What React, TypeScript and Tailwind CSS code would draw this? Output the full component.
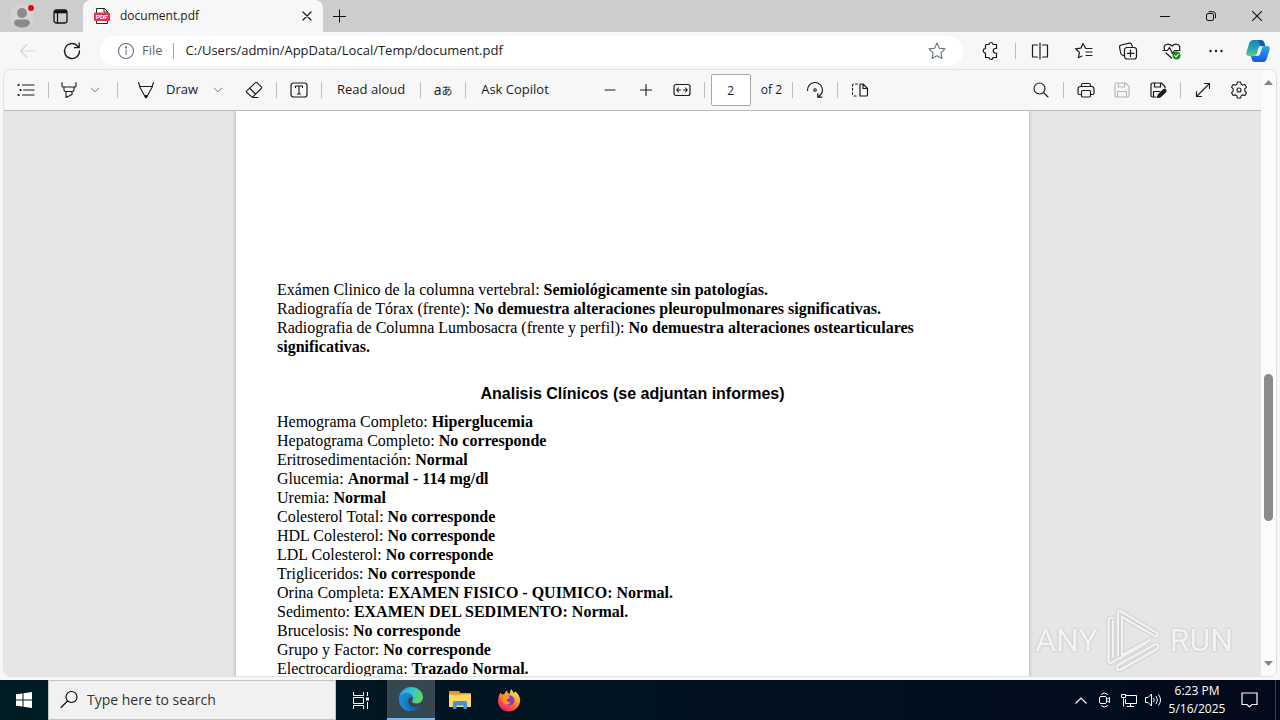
import { ReactNode } from "react";

const linesTop = [
  ["Exámen Clinico de la columna vertebral:", "Semiológicamente sin patologías."],
  [
    "Radiografía de Tórax (frente):",
    "No demuestra alteraciones pleuropulmonares significativas.",
  ],
  [
    "Radiografia de Columna Lumbosacra (frente y perfil):",
    "No demuestra alteraciones ostearticulares significativas.",
  ],
];

const linesLab = [
  ["Hemograma Completo:", "Hiperglucemia"],
  ["Hepatograma Completo:", "No corresponde"],
  ["Eritrosedimentación:", "Normal"],
  ["Glucemia:", "Anormal - 114 mg/dl"],
  ["Uremia:", "Normal"],
  ["Colesterol Total:", "No corresponde"],
  ["HDL Colesterol:", "No corresponde"],
  ["LDL Colesterol:", "No corresponde"],
  ["Trigliceridos:", "No corresponde"],
  ["Orina Completa:", "EXAMEN FISICO - QUIMICO: Normal."],
  ["Sedimento:", "EXAMEN DEL SEDIMENTO: Normal."],
  ["Brucelosis:", "No corresponde"],
  ["Grupo y Factor:", "No corresponde"],
  ["Electrocardiograma:", "Trazado Normal."],
];

type SvgProps = { children: ReactNode; size?: number; className?: string };

// Line icon on a 20 unit grid
const Line = ({ children, size = 20, className = "" }: SvgProps) => (
  <svg
    width={size}
    height={size}
    viewBox="0 0 20 20"
    fill="none"
    stroke="currentColor"
    strokeWidth="1.1"
    strokeLinecap="round"
    strokeLinejoin="round"
    className={`shrink-0 ${className}`}
    aria-hidden="true"
  >
    {children}
  </svg>
);

type ButtonProps = { label: string; children: ReactNode; className?: string };

const IconButton = ({ label, children, className = "w-7" }: ButtonProps) => (
  <button
    type="button"
    aria-label={label}
    className={`flex h-8 shrink-0 items-center justify-center ${className}`}
  >
    {children}
  </button>
);

const Divider = () => <span className="h-4 w-px shrink-0 bg-[#bdbdbd]" />;

const Chevron = () => (
  <Line size={12} className="text-gray-500">
    <path d="M4 7l6 6 6-6" strokeWidth="1.6" />
  </Line>
);

const PdfIcon = () => (
  <svg width="16" height="16" viewBox="0 0 16 16" className="shrink-0" aria-hidden="true">
    <path d="M2.5 5V.5h8l3 3V5M2.5 12v3.5h11V12" fill="#fff" stroke="#222" />
    <path d="M10 .5V4h3.5" fill="none" stroke="#222" />
    <rect y="4.5" width="16" height="8.5" rx="1.2" fill="#dd3b45" />
    <text
      x="8"
      y="11"
      fontSize="6"
      fontWeight="700"
      fill="#fff"
      textAnchor="middle"
      fontFamily="Liberation Sans, sans-serif"
    >
      PDF
    </text>
  </svg>
);

const TitleBar = () => (
  <div className="flex h-8 shrink-0 items-center bg-[#cdcdcd]">
    <div className="flex w-[83px] shrink-0 items-center gap-4 pl-2">
      <IconButton label="Profile">
        <svg width="28" height="28" viewBox="0 0 28 28" aria-hidden="true">
          <circle cx="14" cy="14" r="12" fill="#d6d2d0" />
          <circle cx="14" cy="11" r="5" fill="#8c8a89" />
          <path d="M6 21.5q0-4 4-4h8q4 0 4 4q-2 4-8 4t-8-4z" fill="#8c8a89" />
          <circle cx="23" cy="6" r="3" fill="#d90d16" />
        </svg>
      </IconButton>
      <IconButton label="Tab actions" className="w-4">
        <svg width="15" height="15" viewBox="0 0 15 15" fill="none" stroke="#111" aria-hidden="true">
          <rect x="1" y="1" width="13" height="13" rx="2.5" strokeWidth="1.3" />
          <path d="M1.5 2.8h12" strokeWidth="3" />
          <path d="M4.5 4v10" strokeWidth="1.2" />
        </svg>
      </IconButton>
    </div>
    <div className="flex h-8 w-60 items-center rounded-t-lg bg-[#f7f7f7] pr-1 pl-[11px]">
      <PdfIcon />
      <span className="ml-2.5 text-xs">document.pdf</span>
      <IconButton label="Close tab" className="ml-auto w-6">
        <Line size={16}>
          <path d="M5 5l10 10M15 5L5 15" strokeWidth="1.5" />
        </Line>
      </IconButton>
    </div>
    <IconButton label="New tab" className="w-8">
      <svg width="14" height="14" viewBox="0 0 14 14" stroke="#111" aria-hidden="true">
        <path d="M7.5 .5v13M1 7.5h13" />
      </svg>
    </IconButton>
    <div className="ml-auto flex">
      <IconButton label="Minimize" className="w-[46px]">
        <svg width="10" height="10" stroke="#111" aria-hidden="true">
          <path d="M0 5.5h10" />
        </svg>
      </IconButton>
      <IconButton label="Restore" className="w-[46px]">
        <svg width="10" height="10" fill="none" stroke="#111" aria-hidden="true">
          <rect x=".5" y="2.5" width="7" height="7" rx="1.5" />
          <path d="M2.5 .7h4.5q2.5 0 2.5 2.5v4" />
        </svg>
      </IconButton>
      <IconButton label="Close" className="w-[46px]">
        <svg width="10" height="10" stroke="#111" aria-hidden="true">
          <path d="M0 0l10 10M10 0L0 10" strokeWidth="1.1" />
        </svg>
      </IconButton>
    </div>
  </div>
);

const CopilotLogo = () => (
  <svg width="24" height="24" viewBox="0 0 24 24" aria-hidden="true">
    <defs>
      <linearGradient id="cpLeft" x1="0" y1="0" x2="0" y2="1">
        <stop offset="0" stopColor="#1784c7" />
        <stop offset=".55" stopColor="#22a6b5" />
        <stop offset="1" stopColor="#5fd06f" />
      </linearGradient>
      <linearGradient id="cpRight" x1="0" y1="0" x2="0" y2="1">
        <stop offset="0" stopColor="#2ba8e8" />
        <stop offset="1" stopColor="#1558d8" />
      </linearGradient>
    </defs>
    <path d="M7 1h8q2.5 0 3.2 2.5l1 3.5h-4q-2 0-2.7 2l-2 6q-.8 2-3 2H3q-3.500 0-2.500-4L3.500 3.500Q4.500 1 7 1z" fill="url(#cpLeft)" />
    <path d="M17 23H9q-2.500 0-3.200-2.500L5 17h3.500q2 0 2.700-2l2.200-6q.8-2 2.800-2H21q3.500 0 2.500 4l-3 9.500Q19.500 23 17 23z" fill="url(#cpRight)" />
    <path d="M12.500 9q.8-2 2.700-2h1.500l-2.700 8q-.8 2-2.700 2H9q1.700 0 2.300-2z" fill="#f2f8ff" />
    <path d="M12 1h3q2.500 0 3.200 2.500l1 3.500h-4.700z" fill="#155aa5" />
  </svg>
);

const AddressBar = () => (
  <div className="flex h-[37px] shrink-0 items-center pr-2.5 pl-3">
    <IconButton label="Back" className="w-8 text-gray-300">
      <Line>
        <path d="M17 10H2.5M9 3.5L2.5 10 9 16.5" />
      </Line>
    </IconButton>
    <IconButton label="Refresh" className="ml-3 w-8">
      <Line>
        <path d="M17.5 10a7.5 7.5 0 1 1-2.2-5.3L17 6.5M17.2 2v4.7h-4.7" strokeWidth="1.3" />
      </Line>
    </IconButton>
    <div className="ml-3 flex h-[30px] grow items-center rounded-full bg-white px-4">
      <Line className="text-gray-500">
        <circle cx="10" cy="10" r="7.5" />
        <path d="M10 9v4.5" />
        <circle cx="10" cy="6.5" r=".6" fill="currentColor" />
      </Line>
      <span className="ml-1.5 text-[13px] text-[#666]">File</span>
      <span className="ml-2.5 h-4 w-px bg-gray-400" />
      <input
        aria-label="Address"
        defaultValue="C:/Users/admin/AppData/Local/Temp/document.pdf"
        className="ml-3 grow text-[13px] outline-none"
      />
      <IconButton label="Add to favorites" className="w-5 text-gray-500">
        <Line>
          <path d="M10 2l2.4 5.200 5.600.7-4.100 3.900 1.100 5.700-5-2.800-5 2.800 1.100-5.700L2 7.900l5.600-.7z" />
        </Line>
      </IconButton>
    </div>
    <div className="ml-3.5 flex items-center gap-4">
      <div className="flex items-center gap-2.5">
        <IconButton label="Extensions">
          <Line>
            <path
              d="M5.500 3.500H8a2 2 0 0 1 4 0h3.500V7.500h-1a2 2 0 0 0 0 4.500h1v4.500H12a2 2 0 0 1-4 0H4.500V12a2.200 2.200 0 0 1 0-4.500V4.500q0-1 1-1z"
              strokeWidth="1.2"
            />
          </Line>
        </IconButton>
        <Divider />
        <IconButton label="Split screen">
          <Line>
            <path d="M10 2v16M7.500 4h-5v12h5M12.500 4h5v12h-5" strokeWidth="1.2" />
          </Line>
        </IconButton>
      </div>
      <IconButton label="Favorites">
        <Line>
          <path
            d="M11.500 7L9 2.500 6.800 7.200l-5.300.6 4 3.600-1.200 5.300L8 15M12 7.500h6M12 11h6M12 14.500h6"
            strokeWidth="1.2"
          />
        </Line>
      </IconButton>
      <IconButton label="Collections">
        <Line>
          <path
            d="M6 14.500l-1.500-.3Q3 13.800 2.700 12L1.600 6.500Q1.300 4.500 3.200 4l8-1.800q2-.4 2.600 1.600l.5 1.700"
            strokeWidth="1.2"
          />
          <rect x="6.5" y="6.5" width="12" height="11.5" rx="2.5" strokeWidth="1.2" />
          <path d="M12.500 9v6.500M9.300 12.300h6.500" strokeWidth="1.2" />
        </Line>
      </IconButton>
      <IconButton label="Browser essentials">
        <Line>
          <path
            d="M2.500 8.500C.8 4 6 1 10 5c4-4 9-1 7.500 3.500M1 9.500h4.500l2-3 3 6 2-3H18M4 12l5.500 5"
            strokeWidth="1.2"
          />
          <circle cx="14.5" cy="14.5" r="4" fill="#1b8a1b" stroke="none" />
          <path d="M12.700 14.600l1.300 1.300 2.400-2.600" stroke="#fff" />
        </Line>
      </IconButton>
      <IconButton label="Settings and more">
        <Line>
          <g fill="currentColor" stroke="none">
            <circle cx="4.5" cy="10" r="1.2" />
            <circle cx="10" cy="10" r="1.2" />
            <circle cx="15.5" cy="10" r="1.2" />
          </g>
        </Line>
      </IconButton>
      <IconButton label="Copilot" className="w-6">
        <CopilotLogo />
      </IconButton>
    </div>
  </div>
);

const PdfToolbar = () => (
  <div className="flex h-[41px] shrink-0 items-center gap-2 border-b border-[#bcbcbc] bg-[#f7f7f7] px-2 text-[13px]">
    <IconButton label="Contents">
      <Line>
        <path d="M6.500 5H18M7.500 10H18M6.500 15H18" strokeWidth="1.2" />
        <path d="M2.500 5h.2M4.500 10h.2M2.500 15h.2" strokeWidth="2" />
      </Line>
    </IconButton>
    <Divider />
    <div className="flex">
      <IconButton label="Highlight" className="w-6">
        <Line>
          <path d="M3 2.500v3.500q0 1 1 1h12q1 0 1-1V2.500M5 7v3q0 1.500 1.500 1.500h7Q15 11.500 15 10V7M7 11.500V17.500l6-3v-3" />
        </Line>
      </IconButton>
      <IconButton label="Highlight colors">
        <Chevron />
      </IconButton>
    </div>
    <Divider />
    <div className="flex items-center">
      <button type="button" className="flex items-center gap-2.5 pr-1.5 pl-2.5">
        <Line>
          <path d="M2.500 2.500L4 6.500M17.500 2.500L16 6.500M3.500 6.500h13L11 16.500q-1 2-2 0z" />
          <path d="M8.800 15.500h2.400L10 18z" fill="currentColor" />
        </Line>
        Draw
      </button>
      <IconButton label="Draw properties">
        <Chevron />
      </IconButton>
    </div>
    <IconButton label="Erase">
      <Line>
        <path d="M11.500 2.700q.8-.8 1.600 0l4.200 4.200q.8.800 0 1.600l-8.200 8.200q-.8.800-1.600 0l-4.700-4.200q-.8-.8 0-1.600zM6 8.500l5.500 5.500M8.500 17.500H14" />
      </Line>
    </IconButton>
    <Divider />
    <IconButton label="Add text">
      <Line>
        <rect x="2" y="3" width="16" height="14" rx="2.5" strokeWidth="1.2" />
        <path d="M6.500 7.500V6h7v1.500M10 6v8M8.500 14h3" />
      </Line>
    </IconButton>
    <Divider />
    <button type="button" className="px-[7px] whitespace-nowrap">
      Read aloud
    </button>
    <Divider />
    <button
      type="button"
      aria-label="Translate"
      className="w-7 font-['Open_Sans','Noto_Sans_CJK_JP',sans-serif] text-sm leading-5 whitespace-nowrap"
    >
      a<span className="text-[11px]">あ</span>
    </button>
    <Divider />
    <button type="button" className="px-[7px] whitespace-nowrap">
      Ask Copilot
    </button>
    <IconButton label="Zoom out" className="ml-8 w-7">
      <Line>
        <path d="M5 10h10" />
      </Line>
    </IconButton>
    <IconButton label="Zoom in">
      <Line>
        <path d="M4.500 10h11M10 4.500v11" />
      </Line>
    </IconButton>
    <IconButton label="Fit to width">
      <Line>
        <rect x="2" y="4.5" width="16" height="11" rx="2" strokeWidth="1.2" />
        <path d="M5 10h3.500M11.500 10H15M6.500 8L4.700 10l1.800 2M13.500 8l1.800 2-1.800 2" />
      </Line>
    </IconButton>
    <div className="flex items-center gap-1.5">
      <Divider />
      <input
        id="page"
        defaultValue="2"
        className="h-8 w-10 rounded-xs border border-[#a8a8a8] bg-white text-center text-xs"
      />
    </div>
    <label htmlFor="page" className="px-0.5 text-xs whitespace-nowrap">
      of 2
    </label>
    <Divider />
    <IconButton label="Rotate">
      <Line>
        <path d="M2.500 10.500A7.500 7.500 0 0 1 17.500 9.500Q17.500 14 13 17M12.800 13.500V17.200h4" strokeWidth="1.2" />
        <circle cx="10" cy="10" r="1.3" />
      </Line>
    </IconButton>
    <Divider />
    <IconButton label="Page view">
      <Line>
        <path d="M10 4v12h6.500q1 0 1-1V8.500L13 4zM13 4v4.500h4.500" strokeWidth="1.2" />
        <path d="M7.500 4H4q-1.500 0-1.500 1.500v9Q2.500 16 4 16h3.500" strokeDasharray="2 2.200" />
      </Line>
    </IconButton>
    <div className="ml-auto flex items-center gap-2">
      <IconButton label="Find">
        <Line>
          <circle cx="8.500" cy="8.500" r="5.5" />
          <path d="M12.500 12.500l4.500 4.500" />
        </Line>
      </IconButton>
      <Divider />
      <IconButton label="Print">
        <Line>
          <path
            d="M5.500 6.500V5Q5.500 3.500 7 3.500h6q1.500 0 1.500 1.500v1.500M5 14.500H3.500Q2 14.500 2 13V9q0-2.500 2.500-2.500h11Q18 6.500 18 9v4q0 1.500-1.500 1.500H15"
            strokeWidth="1.2"
          />
          <rect x="5.5" y="10.5" width="9" height="6.5" rx="1.2" strokeWidth="1.2" />
        </Line>
      </IconButton>
      <IconButton label="Save" className="w-7 text-[#b5b5b5]">
        <Line>
          <path d="M4.500 3h9L17 6.500v9q0 1.500-1.500 1.500h-11Q3 17 3 15.500v-11Q3 3 4.500 3zM6.500 3v4h6V3M5.500 17v-5.500h9V17" />
        </Line>
      </IconButton>
      <IconButton label="Save as">
        <Line>
          <path
            d="M8 17H4.500Q3 17 3 15.500v-11Q3 3 4.500 3h9L17 6.500V8M6.500 3v4h6V3M5.500 17v-5.500h6.500"
            strokeWidth="1.2"
          />
          <path d="M9.500 17.500l.8-2.800 5.200-5q1.200-.8 2.100.2t.1 2l-5.300 5z" fill="currentColor" />
        </Line>
      </IconButton>
      <Divider />
      <IconButton label="Full screen">
        <Line>
          <path d="M3.500 16.500l13-13M11.500 3.500h5v5M3.500 11.500v5h5" />
        </Line>
      </IconButton>
      <IconButton label="Settings">
        <Line>
          <circle cx="10" cy="10" r="2" />
          <path d="M8.500 2h3l.7 2.300 1.300.8 2.400-.6 1.600 2.700-1.700 1.700v2.200l1.700 1.700-1.600 2.700-2.400-.6-1.300.8-.7 2.300h-3l-.7-2.300-1.300-.8-2.400.6-1.600-2.700 1.700-1.700V8.900L2.500 7.200l1.600-2.700 2.400.6 1.300-.8z" />
        </Line>
      </IconButton>
    </div>
  </div>
);

const Entry = ({ line }: { line: string[] }) => (
  <p>
    {line[0]} <b>{line[1]}</b>
  </p>
);

const Watermark = () => (
  <div className="absolute right-7 bottom-1 flex items-center gap-2 font-[Roboto,sans-serif] text-[32px] leading-none text-[#f3f3f3] drop-shadow-[0_0_1px_#b5b5b5]">
    <span>ANY</span>
    <svg
      width="56"
      height="64"
      viewBox="0 0 56 64"
      fill="none"
      stroke="#f3f3f3"
      strokeWidth="2.2"
      strokeLinecap="round"
      strokeLinejoin="round"
      aria-hidden="true"
    >
      <path d="M12 47V5q0-3 3-1.500L51 25q2 1.500 0 3-1 .7-2 0L16 9v38" />
      <path d="M7 10q-4.500-1-4.500 3v39q0 4 3.500 2.500L40 35M7 13v36" />
      <path d="M16 47l28-15M12 57l-1 3q0 3 4 1.500L51 41q2-1.500 1-3.500-1-1.500-3-1L12 57" />
    </svg>
    <span>RUN</span>
  </div>
);

const ScrollBar = () => (
  <div className="flex w-[15px] shrink-0 flex-col items-center bg-[#fbfbfb] py-2.5">
    <svg width="9" height="5" fill="#858585" aria-hidden="true">
      <path d="M0 5L4.500 0 9 5z" />
    </svg>
    <div className="flex-[289]" />
    <div className="w-[9px] flex-[147] rounded-full bg-[#8b8b8b]" />
    <div className="flex-[140]" />
    <svg width="9" height="5" fill="#858585" aria-hidden="true">
      <path d="M0 0l4.500 5L9 0z" />
    </svg>
  </div>
);

const EdgeLogo = () => (
  <svg width="26" height="26" viewBox="0 0 26 26" aria-hidden="true">
    <defs>
      <linearGradient id="edgeTop" x1="0" y1=".3" x2="1" y2=".5">
        <stop offset="0" stopColor="#2a9fdf" />
        <stop offset=".5" stopColor="#32c3d2" />
        <stop offset="1" stopColor="#62d957" />
      </linearGradient>
      <linearGradient id="edgeLow" x1="0" y1="0" x2="1" y2="1">
        <stop offset="0" stopColor="#1c91dc" />
        <stop offset="1" stopColor="#135aa8" />
      </linearGradient>
    </defs>
    <path d="M1 12C2 5 7 1 13 1c7 0 12 5 12 10 0 4-3 6.500-6.500 6.500-3 0-4.500-1.200-4.500-2s1-1.300 1-3c0-2.500-2.500-4.500-6-4.500-4 0-7 2-8 4z" fill="url(#edgeTop)" />
    <path d="M1 12c1-3 4-5 8-5 3.500 0 6 2.500 6 5-1-1.500-5-1-5 3 0 4 3.500 6.500 8 6.500 2.200 0 4-.7 5.300-1.500C21 23.500 17 25 13 25 6 25 .5 19 1 12z" fill="url(#edgeLow)" />
    <path d="M1 13c1-3.500 3-5 6-5.300C4 12 5.500 22 13.500 25 6 25.500.5 19.500 1 13z" fill="#1e88d8" />
  </svg>
);

const FolderLogo = () => (
  <svg width="22" height="20" viewBox="0 0 22 20" aria-hidden="true">
    <path d="M0 1.500Q0 1 .6 1h9l2 2H21q1 0 1 1v3H0z" fill="#e59a19" />
    <path d="M0 4.500h22V17H0z" fill="#fbd768" />
    <path d="M4 19v-6.500Q4 11 5.500 11h11q1.500 0 1.500 1.500V19h-3.500v-3.500h-7V19z" fill="#3d93d3" />
  </svg>
);

const FirefoxLogo = () => (
  <svg width="24" height="24" viewBox="0 0 24 24" aria-hidden="true">
    <defs>
      <linearGradient id="fox" x1=".8" y1="0" x2=".2" y2="1">
        <stop offset="0" stopColor="#fff14a" />
        <stop offset=".4" stopColor="#ff9a2b" />
        <stop offset=".7" stopColor="#ff4b3c" />
        <stop offset="1" stopColor="#e31587" />
      </linearGradient>
    </defs>
    <path d="M3.500 4.500L5 6.500 7.500 6Q8 3.500 10 2.500 10 5 12.500 6l1.500-5 3 4 1.500-1.500Q24 8.500 23 14c-1 5.500-6 9.500-11 9.500C5.500 23.500 1 18.500 1 13q0-5 2.500-8.500z" fill="url(#fox)" />
    <circle cx="12.500" cy="12.500" r="5" fill="#7441d8" />
    <path d="M6 9q3.500-2.500 7 0-1 2-3.500 2.500.5 3 4.500 2.500-3 4-7 1.500T6 9z" fill="#ff9226" />
  </svg>
);

const TaskBar = () => (
  <div className="flex h-10 shrink-0 items-stretch bg-linear-to-r from-[#001b24] to-[#020a1c] text-white">
    <button type="button" aria-label="Start" className="flex w-12 items-center justify-center">
      <svg width="16" height="16" fill="#fff" aria-hidden="true">
        <path d="M0 2.300l6.500-.9v6.100H0zM7.500 1.200L16 0v7.500H7.500zM0 8.500h6.500v6.100L0 13.700zM7.500 8.500H16V16l-8.500-1.200z" />
      </svg>
    </button>
    <label className="flex w-72 items-center gap-2 border border-[#c4c4c4] bg-[#f1f1f1] pl-2.5 text-black">
      <Line>
        <circle cx="12.500" cy="7" r="5.5" />
        <path d="M8.500 11L2 17.500" />
      </Line>
      <input
        aria-label="Search"
        placeholder="Type here to search"
        className="w-56 text-sm outline-none placeholder:text-[#333]"
      />
    </label>
    <button type="button" aria-label="Task view" className="flex w-[51px] items-center justify-center">
      <svg width="17" height="17" fill="none" stroke="#fff" aria-hidden="true">
        <path d="M.5 0v3.500h10V0M.5 17v-3.500h10V17M.5 5.500h10v6H.5zM14.500 0v4M14.500 10v7" />
        <path d="M13 5.500h3v3h-3z" fill="#fff" stroke="none" />
      </svg>
    </button>
    <button
      type="button"
      aria-label="Edge"
      className="flex w-12 items-center justify-center border-b-2 border-[#76b9ed] bg-[#35474f]"
    >
      <EdgeLogo />
    </button>
    <button type="button" aria-label="File Explorer" className="flex w-[49px] items-center justify-center">
      <FolderLogo />
    </button>
    <button type="button" aria-label="Firefox" className="flex w-[49px] items-center justify-center">
      <FirefoxLogo />
    </button>
    <div className="ml-auto flex items-center gap-1 pr-1">
      <IconButton label="Show hidden icons" className="w-5">
        <svg width="12" height="7" fill="none" stroke="#fff" strokeWidth="1.2" aria-hidden="true">
          <path d="M.5 6.500L6 1l5.500 5.500" />
        </svg>
      </IconButton>
      <IconButton label="Meet now" className="w-5">
        <svg width="14" height="16" fill="none" stroke="#fff" aria-hidden="true">
          <rect x="1.5" y="4.5" width="7" height="7" rx="1.5" />
          <path d="M8.500 7.500l3-2v5l-3-2M3 2.500q3-3 7 0M3 13.500q3 3 7 0" />
        </svg>
      </IconButton>
      <IconButton label="Network" className="w-5">
        <svg width="16" height="14" fill="none" stroke="#fff" aria-hidden="true">
          <path d="M5 2.500h10.500v8h-11V6M9.500 10.500v3M6 13.500h7M.5 1.500h4v3h-4zM2.500 4.500v9" />
        </svg>
      </IconButton>
      <IconButton label="Volume" className="w-5">
        <svg width="17" height="14" fill="none" stroke="#fff" aria-hidden="true">
          <path d="M.5 4.500H3L6.500 1v12L3 9.500H.5zM8.500 5q1.500 2 0 4M11 3q3 4 0 8M13.500 1.500q4 5.500 0 11" />
        </svg>
      </IconButton>
      <div className="w-[60px] text-center text-xs leading-[18px] whitespace-nowrap">
        <div>6:23 PM</div>
        <div>5/16/2025</div>
      </div>
      <IconButton label="Notifications" className="w-9">
        <svg width="17" height="16" fill="none" stroke="#fff" strokeWidth="1.2" aria-hidden="true">
          <path d="M1 1h15v11.500h-5L8.500 15 6 12.500H1z" />
        </svg>
      </IconButton>
      <span className="ml-1 h-10 w-px bg-[#3b4252]" />
    </div>
  </div>
);

const App = () => {
  return (
    <div className="flex h-screen flex-col overflow-hidden bg-[#f7f7f7] font-['Open_Sans',sans-serif] text-[#1b1b1b]">
      <TitleBar />
      <AddressBar />
      <div className="mx-[3px] mb-[3px] flex min-h-0 grow overflow-hidden rounded-lg border border-[#e3e3e3]">
        <div className="relative flex min-w-0 grow flex-col bg-[#e6e6e6]">
          <PdfToolbar />
          <main className="min-h-0 grow overflow-hidden">
            <article className="mx-auto w-[793px] bg-white px-[41px] pt-[169px] pb-16 font-['Liberation_Serif',serif] text-base leading-[19px] text-black shadow-[0_0_4px_#a3a3a3]">
              {linesTop.map((line) => (
                <Entry key={line[0]} line={line} />
              ))}
              <h2 className="mt-7 mb-[9px] text-center font-['Liberation_Sans',sans-serif] font-bold">
                Analisis Clínicos (se adjuntan informes)
              </h2>
              {linesLab.map((line) => (
                <Entry key={line[0]} line={line} />
              ))}
            </article>
          </main>
          <Watermark />
        </div>
        <ScrollBar />
      </div>
      <TaskBar />
    </div>
  );
};

export default App;
